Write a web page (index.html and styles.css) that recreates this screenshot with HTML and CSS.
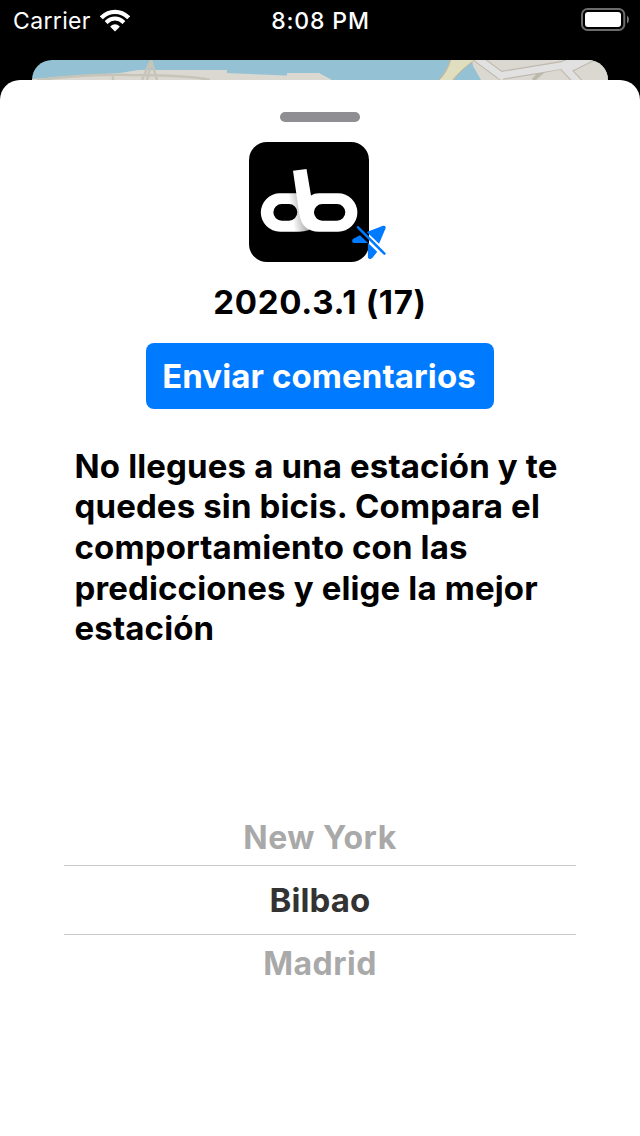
FILE: index.html
```html
<!DOCTYPE html>
<html lang="es">
<head>
<meta charset="utf-8">
<title>Bicis Bilbao</title>
<link rel="stylesheet" href="styles.css">
</head>
<body>
<header class="status">
  <div class="status-left"><span class="carrier">Carrier</span>
    <svg class="wifi" width="30" height="23" viewBox="0 0 30 23"><defs><clipPath id="fan"><path d="M15 22.5L-4 3.5V0H34V3.5z"/></clipPath></defs><g clip-path="url(#fan)" fill="none" stroke="#fff"><circle cx="15" cy="21.3" r="18.5" stroke-width="4.2"/><circle cx="15" cy="21.3" r="11.7" stroke-width="4"/><circle cx="15" cy="21.3" r="6" fill="#fff" stroke="none"/></g></svg>
  </div>
  <time class="clock">8:08 PM</time>
  <svg class="battery" width="48" height="23" viewBox="0 0 48 23"><rect x="1" y="1" width="42.3" height="21" rx="5.5" fill="none" stroke="#6c6c6c" stroke-width="2"/><rect x="4" y="4" width="36" height="15" rx="3" fill="#fff"/><path d="M46 7.5q2 1.5 2 4t-2 4z" fill="#777"/></svg>
</header>
<div class="map">
  <svg width="576" height="20" viewBox="0 0 576 20">
    <rect width="576" height="20" fill="#94c1d4"/>
    <path d="M0 19L40 16L88 13L106 10H195V13L255 15.5V13H287L300 20H0z" fill="#dad8d1"/>
    <path d="M5 20Q55 14 98 15Q155 15 178 20M81 15v5M110 20L119 0L125 20M115 20L120 2" fill="none" stroke="#c7c5b9" stroke-width="2.5"/>
    <path d="M440 0H576V20H449L441 6z" fill="#dad8d1"/>
    <path d="M406 21Q415 13 419 -1H444Q428 10 420 21z" fill="#dfdebe" stroke="#d6b58c"/>
    <path d="M445 -2L472 18M466 16L530 5.5L556 -4M530 5L548 24M534 10L562 -4M503 22L513 12" fill="none" stroke="#bfb8ad" stroke-width="9"/>
    <path d="M445 -2L472 18M466 16L530 5.5L556 -4M530 5L548 24M534 10L562 -4" fill="none" stroke="#e2e1e1" stroke-width="6.8"/>
    <path d="M470 20H504L512 13L527 10L535 20H513" fill="#dad8d1"/>
  </svg>
</div>
<main class="sheet">
  <div class="grabber"></div>
  <div class="app-icon">
    <svg class="logo" width="120" height="120" viewBox="0 0 120 120">
      <defs><linearGradient id="fold" gradientUnits="userSpaceOnUse" x1="42" y1="70" x2="54" y2="68"><stop offset="0" stop-color="#fff"/><stop offset="1" stop-color="#b5b5b5"/></linearGradient></defs>
      <rect width="120" height="120" rx="18"/>
      <path fill="url(#fold)" fill-rule="evenodd" d="M31 51.3H50L60 88Q55 89.7 50 89.7H31A19.2 19.2 0 0 1 31 51.3zM32.7 62A8.35 8.35 0 0 0 32.7 78.7H40A8.35 8.35 0 0 0 40 62z"/>
      <path fill="#fff" fill-rule="evenodd" d="M44 28.8L57.5 27L62 53.4Q65 51.3 70 51.3H89.2A19.2 19.2 0 0 1 89.2 89.7H70Q53 89.7 50.3 72zM73.3 62A8.35 8.35 0 0 0 73.3 78.7H88A8.35 8.35 0 0 0 88 62z"/>
    </svg>
    <svg class="no-location" width="36" height="36" viewBox="0 0 36 36"><path fill="#007aff" d="M14.8 7L31 .8Q34.5 .2 33.5 3.6L27 18.8zM8 10.2L25.2 26.8L20.5 32.8Q17.5 35.5 15.9 32.5V18H1.5Q-.9 17.2 .8 14z"/><path d="M6 2.3L32.4 28.6" stroke="#007aff" stroke-width="2.6" stroke-linecap="round"/></svg>
  </div>
  <h1 class="version">2020.3.1 (17)</h1>
  <button class="feedback">Enviar comentarios</button>
  <p class="intro">No llegues a una estación y te<br>quedes sin bicis. Compara el<br>comportamiento con las<br>predicciones y elige la mejor<br>estación</p>
  <div class="picker">
    <div class="option">New York</div>
    <div class="option selected">Bilbao</div>
    <div class="option">Madrid</div>
  </div>
</main>
</body>
</html>
```
FILE: styles.css
```css
* { box-sizing: border-box; }
body { margin: 0; height: 1136px; background: #000; font-family: Inter, "Liberation Sans", sans-serif; font-weight: 700; display: flex; flex-direction: column; overflow: hidden; }
.status { height: 60px; padding: 7px 11px 0 13px; display: grid; grid-template-columns: 1fr auto 1fr; color: #fff; font-size: 23px; line-height: 28px; }
.status-left { display: flex; gap: 9px; }
.carrier { font-weight: 400; letter-spacing: .35px; }
.wifi { margin-top: 2px; }
.clock { font-weight: 500; letter-spacing: .85px; margin-right: 1px; }
.battery { justify-self: end; margin-top: 1px; }
.map { height: 20px; margin: 0 32px; border-radius: 20px 20px 0 0; overflow: hidden; }
.map svg { display: block; }
.sheet { flex: 1; background: #fff; border-radius: 20px 20px 0 0; display: flex; flex-direction: column; align-items: center; padding-top: 32px; }
.grabber { width: 80px; height: 10px; border-radius: 5px; background: #8e8e93; }
.app-icon { position: relative; width: 120px; height: 120px; margin: 20px 22px 0 0; }
.logo { display: block; }
.no-location { position: absolute; left: 103px; top: 83px; }
.version { margin: 20px 0 0; font-size: 33px; line-height: 40px; letter-spacing: .7px; }
.feedback { margin-top: 21px; width: 348px; height: 66px; padding: 0 2px 0 0; border: 0; border-radius: 8px; background: #007aff; color: #fff; font: inherit; font-size: 33px; letter-spacing: .1px; }
.intro { align-self: flex-start; margin: 36.8px 0 0 74.5px; font-size: 33px; line-height: 40.6px; letter-spacing: .14px; white-space: nowrap; }
.picker { width: 512px; margin-top: 160.2px; text-align: center; font-size: 32px; letter-spacing: .5px; color: #a9a9a9; }
.option { height: 56px; line-height: 57px; }
.selected { height: 70px; line-height: 68px; font-size: 33px; letter-spacing: .1px; color: #333; border: solid #c8c8c8; border-width: 1px 0; }
```
